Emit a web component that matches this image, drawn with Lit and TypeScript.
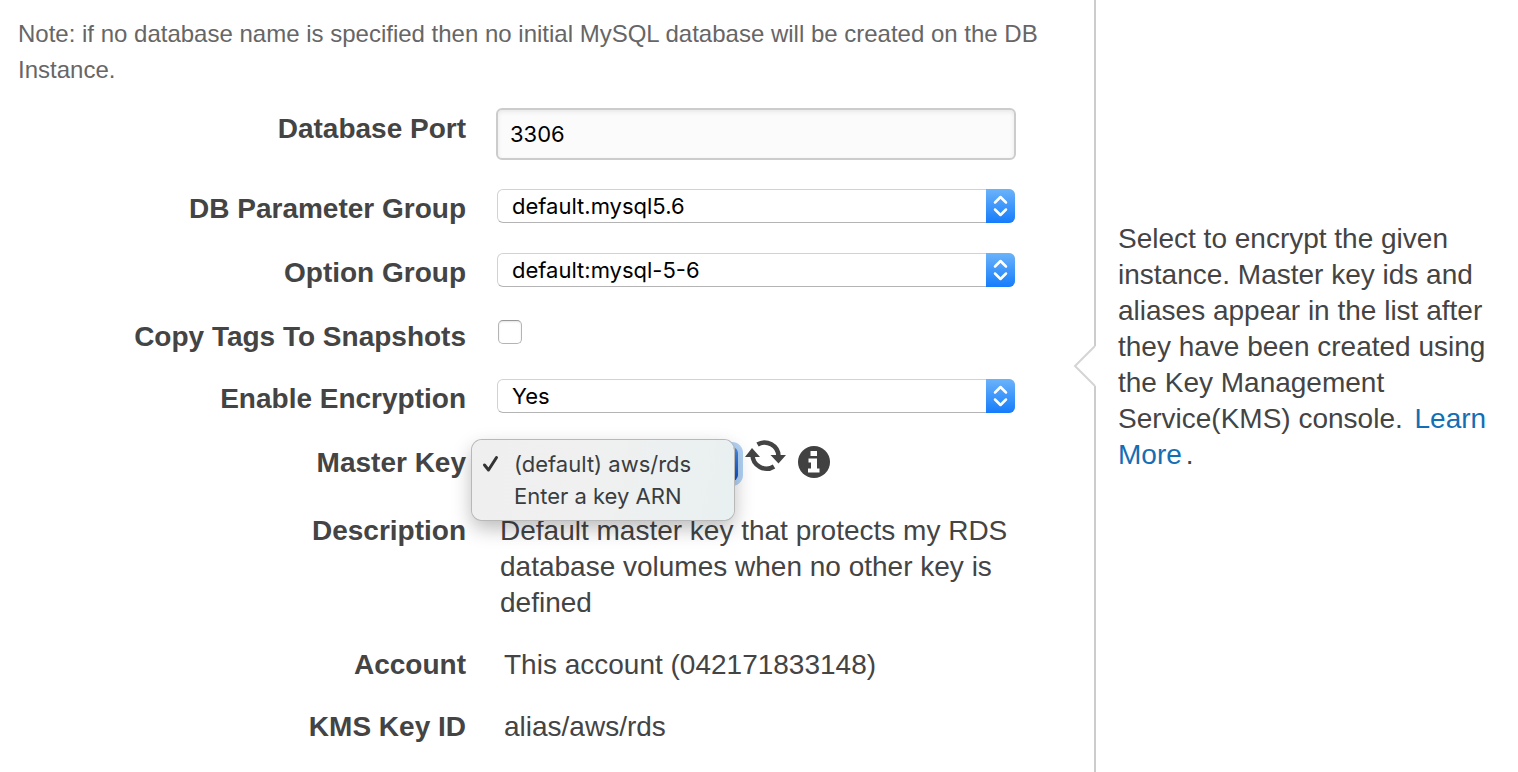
import { LitElement, html, css, svg } from "lit";
import { customElement, state } from "lit/decorators.js";

@customElement("app-root")
class AppRoot extends LitElement {
  @state() private keyIndex = 0;
  private keys = ["(default) aws/rds", "Enter a key ARN"];

  static styles = css`
    :host {
      display: flex;
      min-height: 100vh;
      background: #fff;
      color: #444;
      font: 28px/36px "Liberation Sans", Arial, sans-serif;
    }
    main { flex: 1; min-width: 0; }
    .note {
      margin: 0;
      padding: 16px 40px 20px 18px;
      color: #666;
      font-size: 24px;
    }
    .form {
      display: grid;
      grid-template-columns: minmax(0, 1fr) 520px;
      gap: 23px 30px;
      padding: 0 78px 0 18px;
    }
    .label {
      padding-top: 3px;
      font-weight: bold;
      text-align: right;
    }
    .field { min-height: 41px; }
    .box {
      display: grid;
      margin: 1px;
      border-radius: 6px;
    }
    .select, .chevrons { grid-area: 1 / 1; }
    .select {
      appearance: none;
      box-sizing: border-box;
      width: 100%;
      height: 34px;
      margin: 0;
      padding: 0 40px 0 14px;
      border: 1px solid #d2d2d2;
      border-bottom-color: #b4b4b4;
      border-radius: 6px;
      background: #fff;
      color: #000;
      font: 22px/28px Inter, sans-serif;
      outline: none;
    }
    .chevrons {
      justify-self: end;
      width: 29px;
      height: 34px;
      border-radius: 0 6px 6px 0;
      background: linear-gradient(#6bb3fa, #157cfb);
      pointer-events: none;
    }
    .key { width: 243px; padding-top: 4px; }
    .key .box { box-shadow: 0 0 0 5px #b2d3f5; }
    .key .chevrons { background: linear-gradient(#4b8fe6, #0b4fc9); }
    .port {
      display: block;
      box-sizing: border-box;
      width: 100%;
      height: 52px;
      margin: 0 0 5px;
      padding: 0 12px;
      border: 2px solid #ccc;
      border-radius: 6px;
      background: #fbfbfb;
      box-shadow: inset 0 2px 4px #e8e8e8;
      color: #000;
      font: 22px/28px Inter, sans-serif;
    }
    .tick {
      appearance: none;
      display: block;
      box-sizing: border-box;
      width: 24px;
      height: 24px;
      margin: 4px 2px 11px;
      border: 1px solid #b4b4b4;
      border-top-color: #999;
      border-radius: 5px;
      background: #fff;
      box-shadow: inset 0 1px 2px #e4e4e4;
    }
    .master {
      position: relative;
      display: flex;
      align-items: flex-start;
      min-height: 45px;
    }
    .icon {
      display: block;
      padding: 0;
      border: 0;
      background: none;
    }
    .icon svg { display: block; }
    .refresh { margin: -4px 0 0 6px; }
    .info { margin: 4px 0 0 12px; }
    .menu {
      position: absolute;
      top: -2px;
      left: -24px;
      box-sizing: border-box;
      width: 262px;
      padding: 8px 0;
      border-radius: 10px;
      background: linear-gradient(100deg, #efefef, #f0f0f0 45%, #e9f0f1);
      box-shadow: 0 0 0 1px #b8b8b8, 0 8px 20px rgba(0, 0, 0, 0.28);
    }
    .item {
      display: grid;
      grid-template-columns: 18px 1fr;
      column-gap: 14px;
      align-items: center;
      width: 100%;
      padding: 0 0 0 10px;
      border: 0;
      background: none;
      color: #3a3d3f;
      font: 22px/32px Inter, sans-serif;
      text-align: left;
    }
    .text { padding: 3px 0 0 4px; }
    .value { padding: 3px 0 0 8px; }
    aside {
      position: relative;
      box-sizing: border-box;
      width: 424px;
      padding: 221px 26px 0 22px;
      border-left: 2px solid #ccc;
    }
    .help { margin: 0; }
    .link {
      margin-left: 4px;
      color: #146eb4;
      text-decoration: none;
    }
    .stop { margin-left: 4px; }
    .arrow {
      position: absolute;
      top: 345px;
      left: -23px;
    }
  `;

  private selectBox(id: string, options: string[]) {
    return html`<div class="box">
      <select class="select" id=${id}>
        ${options.map((o) => html`<option>${o}</option>`)}
      </select>
      <svg class="chevrons" viewBox="0 0 29 34" aria-hidden="true">
        <path d="M9 13.500 14.500 8 20 13.500M9 20.500 14.500 26 20 20.500" fill="none" stroke="#fff" stroke-width="2.500" stroke-linecap="round" stroke-linejoin="round" />
      </svg>
    </div>`;
  }

  private selectRow(id: string, label: string, options: string[]) {
    return html`<label class="label" for=${id}>${label}</label>
      <div class="field">${this.selectBox(id, options)}</div>`;
  }

  render() {
    return html`
      <main>
        <p class="note">
          Note: if no database name is specified then no initial MySQL database will be created on the DB Instance.
        </p>
        <div class="form">
          <label class="label" for="port">Database Port</label>
          <input class="port" id="port" type="text" .value=${"3306"} />
          ${this.selectRow("params", "DB Parameter Group", ["default.mysql5.6"])}
          ${this.selectRow("option", "Option Group", ["default:mysql-5-6"])}
          <label class="label" for="tags">Copy Tags To Snapshots</label>
          <input class="tick" id="tags" type="checkbox" />
          ${this.selectRow("encrypt", "Enable Encryption", ["Yes", "No"])}
          <label class="label" for="key">Master Key</label>
          <div class="master">
            <div class="key">${this.selectBox("key", this.keys)}</div>
            <button class="icon refresh" aria-label="Refresh">
              <svg width="41" height="36" viewBox="0 0 41 36" fill="none">
                <path d="M12.500 6.500A14 14 0 0 1 33.500 18M29 28.500A14 14 0 0 1 7.500 17" stroke="#444" stroke-width="4.500" />
                <path d="M0 19 7 10 15 19ZM25.500 17 33.500 25.500 41 17Z" fill="#444" />
              </svg>
            </button>
            <button class="icon info" aria-label="Info">
              <svg width="32" height="32" viewBox="0 0 32 32">
                <circle cx="16" cy="16" r="16" fill="#414141" />
                <path d="M12.500 5h6.500v5h-6.500zM10.500 12.500h8.500v10h2.500v4h-11.500v-4h3v-6h-2.500z" fill="#fff" />
              </svg>
            </button>
            <div class="menu" role="listbox" aria-label="Master Key">
              ${this.keys.map(
                (k, i) => html`<button class="item" role="option" aria-selected=${i === this.keyIndex}
                  @click=${() => (this.keyIndex = i)}>
                  <svg width="18" height="20" viewBox="0 0 18 20">
                    ${i === this.keyIndex
                      ? svg`<path d="M2.500 11 6.500 16 14.500 3.500" fill="none" stroke="#333" stroke-width="3" stroke-linecap="round" stroke-linejoin="round"/>`
                      : null}
                  </svg>
                  <span>${k}</span>
                </button>`
              )}
            </div>
          </div>
          <div class="label">Description</div>
          <div class="text">Default master key that protects my RDS database volumes when no other key is defined</div>
          <div class="label">Account</div>
          <div class="value">This account (042171833148)</div>
          <div class="label">KMS Key ID</div>
          <div class="value">alias/aws/rds</div>
        </div>
      </main>
      <aside>
        <svg class="arrow" width="23" height="42" viewBox="0 0 23 42">
          <path d="M22 1h1v40h-1L2 21z" fill="#fff" />
          <path d="M22 1 2 21 22 41" fill="none" stroke="#d4d4d4" stroke-width="2" />
        </svg>
        <p class="help">
          Select to encrypt the given instance. Master key ids and aliases appear in the list after they have been
          created using the Key Management Service(KMS) console.
          <a class="link" href="#learn">Learn More</a><span class="stop">.</span>
        </p>
      </aside>
    `;
  }
}
